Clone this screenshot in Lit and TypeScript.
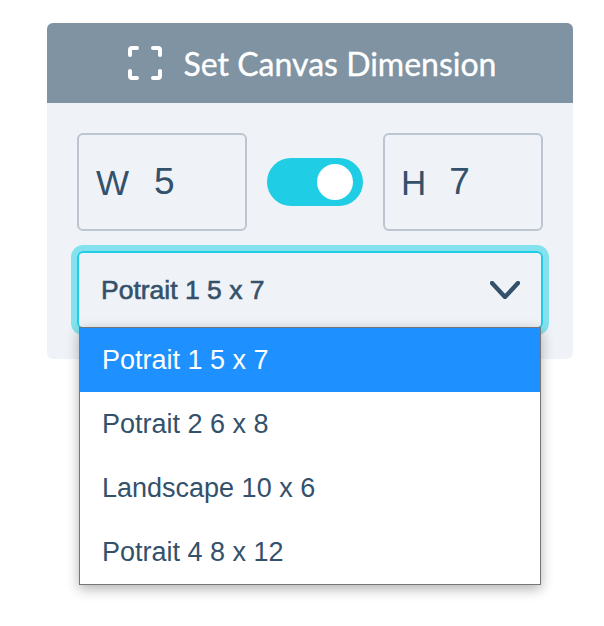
import { LitElement, html, css } from "lit";
import { customElement } from "lit/decorators.js";

@customElement("app-root")
export class AppRoot extends LitElement {
  static styles = css`
    :host { display: block; width: 604px; height: 626px; background: #fff; padding: 23px 31px 0 47px; box-sizing: border-box; font-family: "Liberation Sans", Arial, sans-serif; color: #34516b; }
    .card { width: 526px; height: 336px; background: #eff3f8; border-radius: 6px; }
    .head { height: 80px; background: #8093a3; border-radius: 6px 6px 0 0; display: flex; align-items: center; justify-content: center; gap: 22px; color: #fff; font-family: Lato, sans-serif; font-size: 32px; -webkit-text-stroke: 0.35px #fff; padding-left: 4px; }
    .head svg { display: block; }
    .body { padding: 30px; display: flex; flex-direction: column; gap: 20px; }
    .row { display: flex; align-items: center; gap: 20px; }
    .field { box-sizing: border-box; height: 98px; border: 2px solid #bcc5d0; border-radius: 6px; display: flex; align-items: center; padding-top: 2px; font-size: 35px; }
    .field b { font-weight: 400; font-size: 37px; position: relative; top: -1px; }
    .w { width: 170px; padding-left: 17px; gap: 25px; }
    .h { width: 160px; padding-left: 16px; gap: 23px; }
    .toggle { width: 96px; height: 48px; border-radius: 24px; background: #1fcde4; display: flex; align-items: center; justify-content: flex-end; padding: 0 10px; box-sizing: border-box; }
    .knob { width: 36px; height: 36px; border-radius: 50%; background: #fff; }
    .selectwrap { position: relative; }
    .select { box-sizing: border-box; height: 78px; border: 2px solid #1fcde4; border-radius: 6px; box-shadow: 0 0 0 6px #84e2ef; display: flex; align-items: center; justify-content: space-between; padding: 0 21px 0 22px; font-size: 26.5px; -webkit-text-stroke: 0.6px #34516b; }
    .select svg { display: block; }
    .menu { position: absolute; left: 2px; top: 76px; width: 462px; box-sizing: border-box; background: #fff; border: 1px solid #767676; box-shadow: 0 4px 12px rgba(0,0,0,.3); font-size: 27px; }
    .opt { height: 64px; display: flex; align-items: center; padding-left: 22px; }
    .opt.sel { background: #1e90ff; color: #fff; }
  `;
  render() {
    return html`<div class="card">
      <div class="head">
        <svg width="34" height="34" viewBox="0 0 34 34" fill="none" stroke="#fff" stroke-width="4" stroke-linecap="round" stroke-linejoin="round">
          <path d="M2 9V4a2 2 0 0 1 2-2h5M25 2h5a2 2 0 0 1 2 2v5M32 25v5a2 2 0 0 1-2 2h-5M9 32H4a2 2 0 0 1-2-2v-5"/>
        </svg>
        <span>Set Canvas Dimension</span>
      </div>
      <div class="body">
        <div class="row">
          <div class="field w"><span>W</span><b>5</b></div>
          <div class="toggle"><div class="knob"></div></div>
          <div class="field h"><span>H</span><b>7</b></div>
        </div>
        <div class="selectwrap">
          <div class="select"><span>Potrait 1 5 x 7</span>
            <svg width="30" height="18" viewBox="0 0 30 18" fill="none" stroke="#34516b" stroke-width="4.4" stroke-linecap="round" stroke-linejoin="round"><path d="M2 2l13 14L28 2"/></svg>
          </div>
          <div class="menu">
            <div class="opt sel">Potrait 1 5 x 7</div>
            <div class="opt">Potrait 2 6 x 8</div>
            <div class="opt">Landscape 10 x 6</div>
            <div class="opt">Potrait 4 8 x 12</div>
          </div>
        </div>
      </div>
    </div>`;
  }
}
